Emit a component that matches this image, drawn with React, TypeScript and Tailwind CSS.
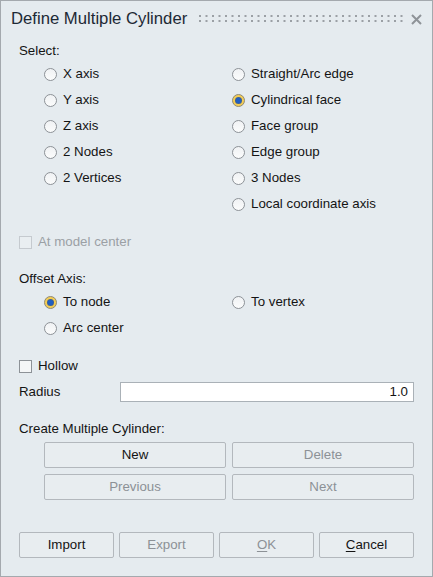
import React from "react";

const font = { fontFamily: '"Liberation Sans", Arial, sans-serif' };

function Radio({ label, checked = false }: { label: string; checked?: boolean }) {
  return (
    <div className="flex h-[26px] items-center">
      {checked ? (
        <span className="flex h-[13px] w-[13px] items-center justify-center rounded-full border border-[#8f8a78] bg-[#f3cd55]">
          <span className="h-[5px] w-[5px] rounded-full bg-[#1f5fc4] shadow-[0_0_0_1px_#3a5f9a]" />
        </span>
      ) : (
        <span className="h-[13px] w-[13px] rounded-full border border-[#8d9297] bg-gradient-to-b from-[#f0f2f4] to-[#fbfcfc]" />
      )}
      <span className="ml-[6px] text-[13.3px] text-[#141414]">{label}</span>
    </div>
  );
}

function Btn({
  children,
  disabled = false,
}: {
  children: React.ReactNode;
  disabled?: boolean;
}) {
  return (
    <div
      className={`flex h-[26px] items-center justify-center rounded-[2px] border border-[#b3b8bd] bg-[#e8edf0] text-[13.3px] ${
        disabled ? "text-[#8c9196]" : "text-[#141414]"
      }`}
    >
      {children}
    </div>
  );
}

export default function App() {
  const dots = Array.from({ length: 32 }, (_, i) => i);
  return (
    <div
      style={font}
      className="flex h-[577px] w-[433px] flex-col border border-[#a4a9ae] bg-[#e5ebef]"
    >
      {/* Title */}
      <div className="flex h-[36px] items-center pl-[10px] pr-[8px]">
        <span className="text-[16.7px] text-[#1d2935]">Define Multiple Cylinder</span>
        <svg className="ml-[12px]" width="206" height="8" viewBox="0 0 206 8">
          {dots.map((i) => (
            <React.Fragment key={i}>
              <rect x={i * 6.5} y={0} width={2} height={2} fill="#9ba0a5" />
              <rect x={i * 6.5} y={5} width={2} height={2} fill="#9ba0a5" />
            </React.Fragment>
          ))}
        </svg>
        <svg className="ml-[6px]" width="11" height="11" viewBox="0 0 11 11">
          <path d="M1 1 L10 10 M10 1 L1 10" stroke="#8e9398" strokeWidth="2" />
        </svg>
      </div>

      <div className="flex flex-col px-[18px]">
        <div className="mt-[4px] flex h-[20px] items-center text-[13.3px] text-[#141414]">Select:</div>

        <div className="grid grid-cols-[188px_1fr] pl-[25px]">
          <Radio label="X axis" />
          <Radio label="Straight/Arc edge" />
          <Radio label="Y axis" />
          <Radio label="Cylindrical face" checked />
          <Radio label="Z axis" />
          <Radio label="Face group" />
          <Radio label="2 Nodes" />
          <Radio label="Edge group" />
          <Radio label="2 Vertices" />
          <Radio label="3 Nodes" />
          <div />
          <Radio label="Local coordinate axis" />
        </div>

        <div className="mt-[15px] flex h-[20px] items-center">
          <span className="h-[13px] w-[13px] border border-[#c5cacf] bg-[#e9eef1]" />
          <span className="ml-[6px] text-[13.3px] text-[#9ba0a5]">At model center</span>
        </div>

        <div className="mt-[17px] flex h-[20px] items-center text-[13.3px] text-[#141414]">Offset Axis:</div>

        <div className="grid grid-cols-[188px_1fr] pl-[25px]">
          <Radio label="To node" checked />
          <Radio label="To vertex" />
          <Radio label="Arc center" />
        </div>

        <div className="mt-[15px] flex h-[20px] items-center">
          <span className="h-[13px] w-[13px] border border-[#8d9297] bg-[#f4f6f7]" />
          <span className="ml-[6px] text-[13.3px] text-[#141414]">Hollow</span>
        </div>

        <div className="mt-[6px] flex h-[20px] items-center">
          <span className="w-[101px] text-[13.3px] text-[#141414]">Radius</span>
          <div className="flex h-[20px] flex-1 items-center justify-end border border-[#aab1b7] bg-white pr-[5px] text-[13.3px] text-[#141414]">
            1.0
          </div>
        </div>

        <div className="mt-[17px] flex h-[20px] items-center text-[13.3px] text-[#141414]">
          Create Multiple Cylinder:
        </div>

        <div className="mt-[3px] grid grid-cols-2 gap-x-[6px] gap-y-[6px] pl-[25px]">
          <Btn>New</Btn>
          <Btn disabled>Delete</Btn>
          <Btn disabled>Previous</Btn>
          <Btn disabled>Next</Btn>
        </div>

        <div className="mt-[32px] grid grid-cols-4 gap-x-[5px]">
          <Btn>Import</Btn>
          <Btn disabled>Export</Btn>
          <Btn disabled>
            <span>
              <span className="underline underline-offset-2">O</span>K
            </span>
          </Btn>
          <Btn>
            <span>
              <span className="underline underline-offset-2">C</span>ancel
            </span>
          </Btn>
        </div>
      </div>
    </div>
  );
}
